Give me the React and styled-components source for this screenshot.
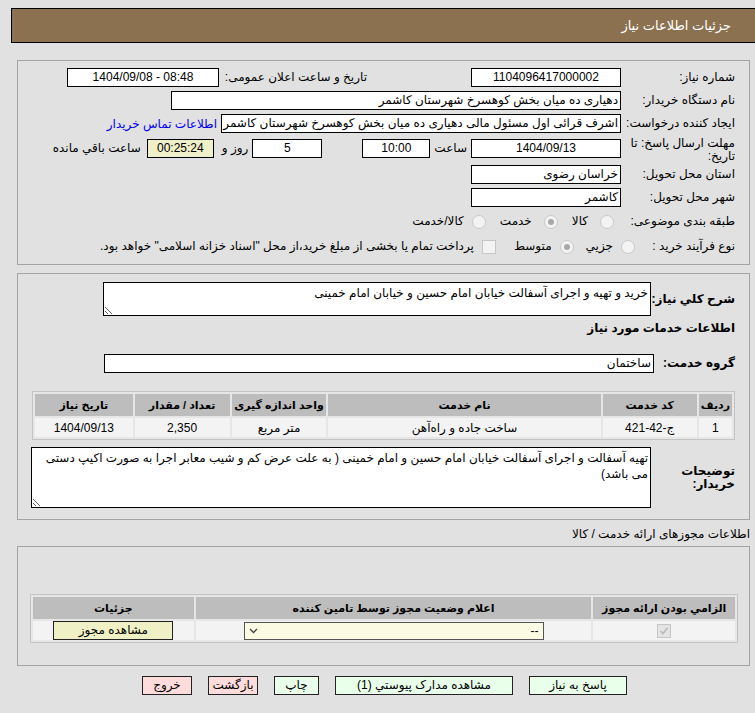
import styled, { createGlobalStyle } from "styled-components";

const GlobalStyle = createGlobalStyle`
  body {
    margin: 0;
    background: #e1e1e1;
    font-family: "Liberation Sans", "DejaVu Sans", sans-serif;
    font-size: 12px;
    color: #000;
  }
`;

const Page = styled.div`
  direction: rtl;
  padding-bottom: 16px;
`;

const TitleBar = styled.div`
  margin: 8px 0 0 11px;
  height: 35px;
  box-sizing: border-box;
  background: #8b7150;
  border: 1px solid #000;
  border-right: none;
  color: #fff;
  display: flex;
  align-items: center;
  padding-right: 24px;
  font-size: 13px;
`;

const Panel = styled.div`
  margin: ${(p) => p.$top}px 5px 0 17px;
  border: 1px solid #a4a4a4;
  padding: ${(p) => p.$pad};
`;

const Row = styled.div`
  display: flex;
  align-items: ${(p) => (p.$top ? "flex-start" : "center")};
  height: ${(p) => p.$h || 23}px;
  margin-top: ${(p) => p.$mt || 0}px;
  white-space: nowrap;
`;

const Label = styled.div`
  width: ${(p) => p.$w}px;
  flex: none;
  margin-right: ${(p) => p.$mr || 0}px;
  font-weight: ${(p) => (p.$bold ? "bold" : "normal")};
  line-height: 13px;
  white-space: ${(p) => (p.$wrap ? "normal" : "nowrap")};
  padding-top: ${(p) => p.$pt || 0}px;
`;

const Field = styled.div`
  width: ${(p) => p.$w}px;
  height: 19px;
  box-sizing: border-box;
  flex: none;
  margin-right: ${(p) => p.$mr || 0}px;
  margin-top: ${(p) => p.$mt || 0}px;
  background: ${(p) => p.$bg || "#fff"};
  border: 1px solid #000;
  padding: 0 2px;
  line-height: 17px;
  direction: ${(p) => (p.$ltr ? "ltr" : "rtl")};
  text-align: ${(p) => (p.$center ? "center" : "right")};
  overflow: hidden;
  white-space: nowrap;
`;

const Text = styled.span`
  margin-right: ${(p) => p.$mr || 0}px;
  line-height: 19px;
  margin-top: ${(p) => p.$mt || 0}px;
`;

const Link = styled.a`
  color: #0000ee;
  text-decoration: none;
  margin-right: 4px;
`;

const Radio = styled.span`
  width: 12px;
  height: 12px;
  flex: none;
  border-radius: 50%;
  border: 1px solid #c9c9c9;
  background: #f3f3f3;
  margin-right: ${(p) => p.$mr || 0}px;
  display: flex;
  align-items: center;
  justify-content: center;
  &::after {
    content: "";
    width: 6px;
    height: 6px;
    border-radius: 50%;
    background: ${(p) => (p.$on ? "#a9a9a9" : "transparent")};
  }
`;

const Box = styled.span`
  width: 12px;
  height: 12px;
  flex: none;
  border: 1px solid #c6c6c6;
  background: ${(p) => (p.$on ? "#e4e4e4" : "#f3f3f3")};
  margin-right: ${(p) => p.$mr || 0}px;
  display: inline-flex;
  align-items: center;
  justify-content: center;
  vertical-align: middle;
`;

const Area = styled.textarea`
  width: ${(p) => p.$w}px;
  height: ${(p) => p.$h}px;
  box-sizing: border-box;
  flex: none;
  margin: 0;
  margin-right: ${(p) => p.$mr || 0}px;
  border: 1px solid #000;
  background: #fff;
  font-family: "Liberation Sans", "DejaVu Sans", sans-serif;
  font-size: 12px;
  line-height: 16px;
  padding: 2px 2px;
  direction: rtl;
  overflow: hidden;
  outline: none;
`;

const SectionTitle = styled.div`
  font-weight: bold;
  margin-top: ${(p) => p.$mt}px;
  line-height: 16px;
`;

const Grid = styled.table`
  width: ${(p) => p.$w}px;
  margin-top: ${(p) => p.$mt || 0}px;
  border: 1px solid #c3c3c3;
  border-spacing: 2px;
  background: #e6e6e6;
  font-size: 11px;
`;

const Th = styled.th`
  width: ${(p) => p.$w}px;
  background: #bdbdbd;
  height: 22px;
  padding: 0 2px;
  font-weight: bold;
  white-space: nowrap;
  text-align: ${(p) => p.$align || "center"};
`;

const Td = styled.td`
  background: #f3f3f3;
  height: 19px;
  padding: 0 2px;
  text-align: center;
  white-space: nowrap;
  font-size: 12px;
`;

const Select = styled.div`
  width: 300px;
  height: 18px;
  box-sizing: border-box;
  margin: 0 auto;
  border: 1px solid #555;
  background: #fbfbe4;
  display: flex;
  align-items: center;
  justify-content: space-between;
  padding: 0 4px;
`;

const Btn = styled.div`
  width: ${(p) => p.$w}px;
  height: 19px;
  box-sizing: border-box;
  border: 1px solid #222;
  background: ${(p) =>
    p.$kind === "red" ? "#ffdcdc" : p.$kind === "yellow" ? "#f0f0c6" : "#eaffea"};
  text-align: center;
  line-height: 17px;
  font-size: 12px;
  margin: ${(p) => (p.$center ? "0 auto" : "0")};
`;

const Buttons = styled.div`
  display: flex;
  justify-content: center;
  gap: 16px;
  margin-top: 10px;
  padding-left: 14px;
`;

const PlainTitle = styled.div`
  margin: 6px 5px 0 0;
  line-height: 16px;
`;

const Check = () => (
  <svg width="10" height="10" viewBox="0 0 10 10">
    <path d="M1.5 5.2 L4 7.6 L8.6 1.8" fill="none" stroke="#b9b9b9" strokeWidth="1.6" />
  </svg>
);

const Chevron = () => (
  <svg width="9" height="6" viewBox="0 0 9 6">
    <path d="M1 1 L4.5 4.5 L8 1" fill="none" stroke="#444" strokeWidth="1.3" />
  </svg>
);

export default function App() {
  return (
    <Page>
      <GlobalStyle />
      <TitleBar>جزئیات اطلاعات نیاز</TitleBar>

      <Panel $top={17} $pad="5px 14px 5px 14px">
        <Row>
          <Label $w={114}>شماره نیاز:</Label>
          <Field $w={150} $center>1104096417000002</Field>
          <Label $w={148} $mr={104}>تاریخ و ساعت اعلان عمومی:</Label>
          <Field $w={152} $center $ltr>1404/09/08 - 08:48</Field>
        </Row>
        <Row>
          <Label $w={114}>نام دستگاه خریدار:</Label>
          <Field $w={450}>دهیاری ده میان بخش کوهسرخ شهرستان کاشمر</Field>
        </Row>
        <Row>
          <Label $w={114}>ایجاد کننده درخواست:</Label>
          <Field $w={400}>اشرف قرائی اول مسئول مالی دهیاری ده میان بخش کوهسرخ شهرستان کاشمر</Field>
          <Link href="#">اطلاعات تماس خریدار</Link>
        </Row>
        <Row $h={28} $top>
          <Label $w={114} $wrap $pt={2}>
            مهلت ارسال پاسخ: تا
            <br />
            تاریخ:
          </Label>
          <Field $w={150} $center $mt={4}>1404/09/13</Field>
          <Text $mr={4} $mt={4}>ساعت</Text>
          <Field $w={68} $center $mr={4} $mt={4}>10:00</Field>
          <Field $w={70} $center $mr={40} $mt={4}>5</Field>
          <Text $mr={4} $mt={4}>روز و</Text>
          <Field $w={67} $center $mr={8} $mt={4} $bg="#efefc8">00:25:24</Field>
          <Text $mr={6} $mt={4}>ساعت باقي مانده</Text>
        </Row>
        <Row>
          <Label $w={114}>استان محل تحویل:</Label>
          <Field $w={150}>خراسان رضوی</Field>
        </Row>
        <Row>
          <Label $w={114}>شهر محل تحویل:</Label>
          <Field $w={150}>کاشمر</Field>
        </Row>
        <Row $h={25}>
          <Label $w={114}>طبقه بندی موضوعی:</Label>
          <Radio $mr={7} />
          <Text $mr={12}>کالا</Text>
          <Radio $mr={14} $on />
          <Text $mr={12}>خدمت</Text>
          <Radio $mr={14} />
          <Text $mr={8}>کالا/خدمت</Text>
        </Row>
        <Row $h={25}>
          <Label $w={100}>نوع فرآیند خرید :</Label>
          <Radio />
          <Text $mr={8}>جزيي</Text>
          <Radio $mr={12} $on />
          <Text $mr={8}>متوسط</Text>
          <Box $mr={18} />
          <Text $mr={8}>پرداخت تمام یا بخشی از مبلغ خرید،از محل "اسناد خزانه اسلامی" خواهد بود.</Text>
        </Row>
      </Panel>

      <Panel $top={8} $pad="8px 14px 11px 14px">
        <Row $h={34}>
          <Label $w={84} $bold>شرح کلي نیاز:</Label>
          <Area $w={548} $h={34} readOnly defaultValue="خرید و تهیه و اجرای آسفالت خیابان امام حسین و خیابان امام خمینی" />
        </Row>
        <SectionTitle $mt={4}>اطلاعات خدمات مورد نیاز</SectionTitle>
        <Row $h={19} $mt={18}>
          <Label $w={81} $bold>گروه خدمت:</Label>
          <Field $w={550}>ساختمان</Field>
        </Row>
        <Grid $w={703} $mt={18}>
          <thead>
            <tr>
              <Th $w={23} $align="right">ردیف</Th>
              <Th $w={92}>کد خدمت</Th>
              <Th $w={275}>نام خدمت</Th>
              <Th $w={91}>واحد اندازه گیری</Th>
              <Th $w={92}>تعداد / مقدار</Th>
              <Th $w={95}>تاریخ نیاز</Th>
            </tr>
          </thead>
          <tbody>
            <tr>
              <Td>1</Td>
              <Td>ج-42-421</Td>
              <Td>ساخت جاده و راه‌آهن</Td>
              <Td>متر مربع</Td>
              <Td>2,350</Td>
              <Td>1404/09/13</Td>
            </tr>
          </tbody>
        </Grid>
        <Row $h={61} $mt={7}>
          <Label $w={84} $bold $wrap>
            توضیحات
            <br />
            خریدار:
          </Label>
          <Area
            $w={620}
            $h={61}
            readOnly
            defaultValue="تهیه آسفالت و اجرای آسفالت خیابان امام حسین و امام خمینی ( به علت عرض کم و شیب معابر اجرا به صورت اکیپ دستی می باشد)"
          />
        </Row>
      </Panel>

      <PlainTitle>اطلاعات مجوزهای ارائه خدمت / کالا</PlainTitle>

      <Panel $top={4} $pad="47px 11px 22px 12px">
        <Grid $w={708}>
          <thead>
            <tr>
              <Th $w={138}>الزامي بودن ارائه مجوز</Th>
              <Th $w={395}>اعلام وضعیت مجوز توسط تامین کننده</Th>
              <Th $w={158}>جزئیات</Th>
            </tr>
          </thead>
          <tbody>
            <tr>
              <Td>
                <Box $on>
                  <Check />
                </Box>
              </Td>
              <Td>
                <Select>
                  <span>--</span>
                  <Chevron />
                </Select>
              </Td>
              <Td>
                <Btn $w={120} $kind="yellow" $center>مشاهده مجوز</Btn>
              </Td>
            </tr>
          </tbody>
        </Grid>
      </Panel>

      <Buttons>
        <Btn $w={98}>پاسخ به نیاز</Btn>
        <Btn $w={178}>مشاهده مدارک پیوستي (1)</Btn>
        <Btn $w={45}>چاپ</Btn>
        <Btn $w={50} $kind="red">بازگشت</Btn>
        <Btn $w={50} $kind="red">خروج</Btn>
      </Buttons>
    </Page>
  );
}
